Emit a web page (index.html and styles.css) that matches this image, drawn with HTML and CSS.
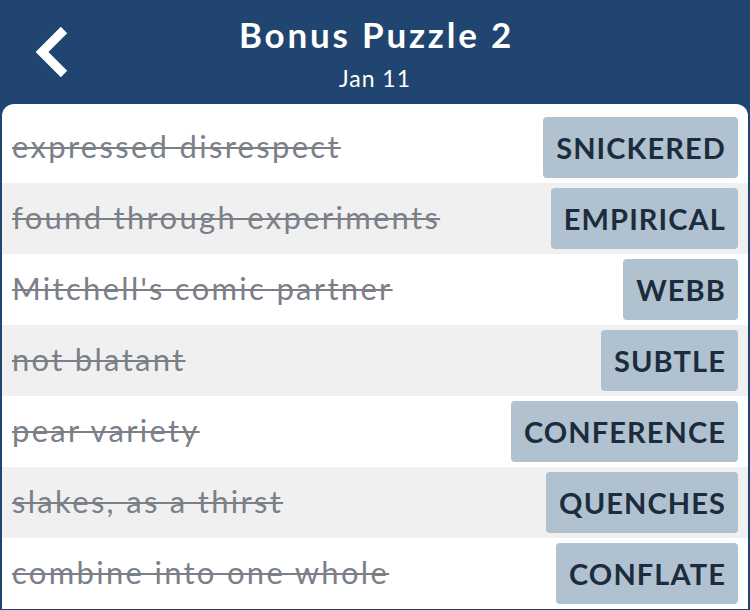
FILE: index.html
```html
<!DOCTYPE html>
<html lang="en">
<head>
  <meta charset="UTF-8">
  <meta name="viewport" content="width=device-width, initial-scale=1.0">
  <title>Bonus Puzzle 2</title>
  <link rel="stylesheet" href="styles.css">
</head>
<body>
  <header class="top-bar">
    <a class="back" href="#" title="Back">
      <svg width="40" height="56" viewBox="0 0 40 56">
        <polyline points="30,4 8,26 30,48" fill="none" stroke="#fff" stroke-width="9"/>
      </svg>
    </a>
    <div class="titles">
      <h1>Bonus Puzzle 2</h1>
      <p class="date">Jan 11</p>
    </div>
  </header>

  <main class="card">
    <div class="row">
      <span class="clue">expressed disrespect</span>
      <span class="answer">SNICKERED</span>
    </div>
    <div class="row alt">
      <span class="clue">found through experiments</span>
      <span class="answer">EMPIRICAL</span>
    </div>
    <div class="row">
      <span class="clue">Mitchell's comic partner</span>
      <span class="answer">WEBB</span>
    </div>
    <div class="row alt">
      <span class="clue">not blatant</span>
      <span class="answer">SUBTLE</span>
    </div>
    <div class="row">
      <span class="clue">pear variety</span>
      <span class="answer">CONFERENCE</span>
    </div>
    <div class="row alt">
      <span class="clue">slakes, as a thirst</span>
      <span class="answer">QUENCHES</span>
    </div>
    <div class="row">
      <span class="clue">combine into one whole</span>
      <span class="answer">CONFLATE</span>
    </div>
  </main>
</body>
</html>
```

FILE: styles.css
```css
/* Reset */
* {
  margin: 0;
  padding: 0;
  box-sizing: border-box;
}

body {
  font-family: Lato, "Open Sans", sans-serif;
  background: #1f4570;
  width: 750px;
  height: 610px;
  overflow: hidden;
}

.top-bar {
  height: 104px;
  position: relative;
  color: #fff;
  text-align: center;
  padding-top: 14px;
}

.back {
  position: absolute;
  left: 34px;
  top: 26px;
  display: block;
}

h1 {
  font-size: 35px;
  font-weight: 700;
  line-height: 40px;
  letter-spacing: 2.8px;
  padding-left: 3px;
}

.date {
  font-size: 23px;
  line-height: 28px;
  margin-top: 10px;
  letter-spacing: 1px;
}

.card {
  margin: 0 2px;
  background: #fff;
  border-radius: 12px 12px 0 0;
  padding-top: 8px;
}

.row {
  height: 71px;
  display: flex;
  align-items: center;
  justify-content: space-between;
  padding: 0 10px;
}

.row.alt {
  background: #f0f0f0;
}

.clue {
  font-size: 31px;
  color: #7b8088;
  letter-spacing: 2.3px;
  margin-top: -3px;
  text-decoration: line-through;
  text-decoration-thickness: 2px;
}

.answer {
  background: #b0c1d0;
  color: #1c2c3c;
  font-weight: 700;
  font-size: 29px;
  letter-spacing: 1.1px;
  height: 61px;
  line-height: 61px;
  padding: 0 12px 0 13px;
  border-radius: 4px;
}
```
